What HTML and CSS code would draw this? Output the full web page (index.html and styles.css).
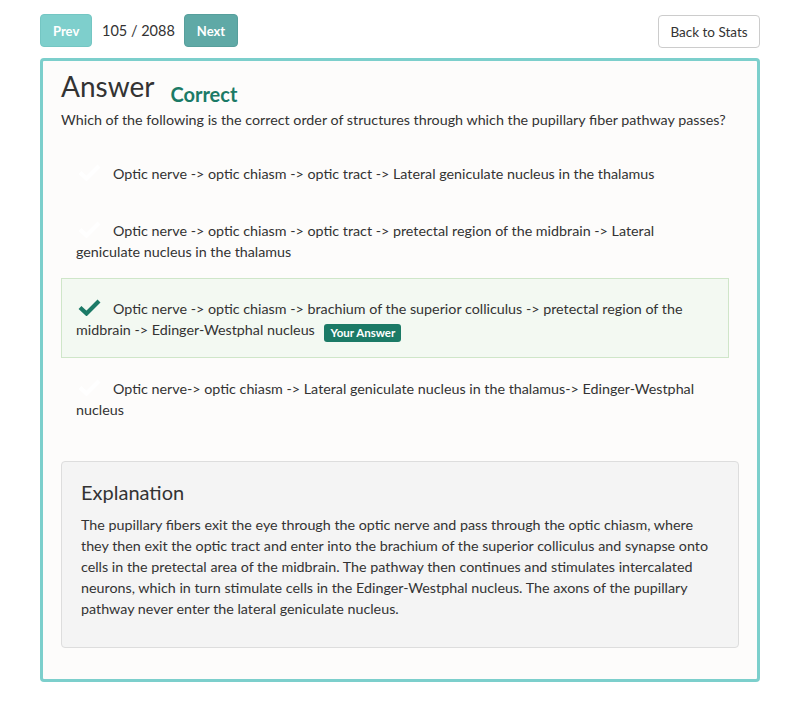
FILE: index.html
```html
<!DOCTYPE html>
<html>
<head>
<meta charset="utf-8">
<link rel="stylesheet" href="styles.css">
</head>
<body>
<div class="page">
  <div class="topbar">
    <div class="nav">
      <button class="btn btn-prev">Prev</button>
      <span class="counter">105 / 2088</span>
      <button class="btn btn-next">Next</button>
    </div>
    <button class="btn btn-back">Back to Stats</button>
  </div>
  <div class="card">
    <div class="head">
      <h1 class="title">Answer</h1>
      <span class="status">Correct</span>
    </div>
    <p class="question">Which of the following is the correct order of structures through which the pupillary fiber pathway passes?</p>
    <div class="options">
      <div class="option"><svg class="check check-hidden" width="23" height="17" viewBox="0 0 23 17"><path d="M2 8.5 L8.5 14.5 L21 2"/></svg>Optic nerve -&gt; optic chiasm -&gt; optic tract -&gt; Lateral geniculate nucleus in the thalamus</div>
      <div class="option"><svg class="check check-hidden" width="23" height="17" viewBox="0 0 23 17"><path d="M2 8.5 L8.5 14.5 L21 2"/></svg>Optic nerve -&gt; optic chiasm -&gt; optic tract -&gt; pretectal region of the midbrain -&gt; Lateral geniculate nucleus in the thalamus</div>
      <div class="option option-correct"><svg class="check" width="23" height="17" viewBox="0 0 23 17"><path d="M2 8.5 L8.5 14.5 L21 2"/></svg>Optic nerve -&gt; optic chiasm -&gt; brachium of the superior colliculus -&gt; pretectal region of the midbrain -&gt; Edinger-Westphal nucleus <span class="badge">Your Answer</span></div>
      <div class="option"><svg class="check check-hidden" width="23" height="17" viewBox="0 0 23 17"><path d="M2 8.5 L8.5 14.5 L21 2"/></svg>Optic nerve-&gt; optic chiasm -&gt; Lateral geniculate nucleus in the thalamus-&gt; Edinger-Westphal nucleus</div>
    </div>
    <div class="explanation">
      <h2 class="exp-title">Explanation</h2>
      <p class="exp-text">The pupillary fibers exit the eye through the optic nerve and pass through the optic chiasm, where they then exit the optic tract and enter into the brachium of the superior colliculus and synapse onto cells in the pretectal area of the midbrain. The pathway then continues and stimulates intercalated neurons, which in turn stimulate cells in the Edinger-Westphal nucleus. The axons of the pupillary pathway never enter the lateral geniculate nucleus.</p>
    </div>
  </div>
</div>
</body>
</html>
```
FILE: styles.css
```css
* { box-sizing: border-box; }
body {
  margin: 0;
  background: #ffffff;
  font-family: Lato, "Open Sans", sans-serif;
  color: #333333;
  font-size: 14.3px;
}
.page {
  width: 720px;
  margin: 0 auto;
  padding-top: 14px;
}
.topbar {
  display: flex;
  justify-content: space-between;
  align-items: flex-start;
  height: 44px;
}
.nav {
  display: flex;
  align-items: center;
  gap: 10px;
}
.btn {
  height: 33px;
  border-radius: 4px;
  font-family: Lato, sans-serif;
  font-size: 13px;
  padding: 0 12px;
  border: 1px solid transparent;
  cursor: pointer;
}
.btn-prev {
  width: 52px;
  background: #7ecfcc;
  border-color: #74c6c3;
  color: #fff;
  font-weight: 700;
}
.btn-next {
  width: 54px;
  margin-left: -1px;
  background: #5fa9a6;
  border-color: #579f9c;
  color: #fff;
  font-weight: 700;
}
.counter {
  font-size: 14.5px;
  color: #333;
}
.btn-back {
  margin-top: 1px;
  width: 102px;
  background: #fff;
  border-color: #cccccc;
  color: #333;
  font-size: 13.5px;
  padding: 0;
}
.card {
  border: 3px solid #7ccfcc;
  border-radius: 4px;
  background: #fdfcfb;
  padding: 7px 18px 31px 18px;
  height: 624px;
}
.head {
  display: flex;
  align-items: baseline;
  gap: 16px;
  height: 36px;
}
.title {
  margin: 0;
  font-size: 28px;
  font-weight: 400;
  line-height: 36px;
  color: #333;
}
.status {
  font-size: 20px;
  font-weight: 700;
  color: #1b7a66;
  position: relative;
  top: 5px;
}
.question {
  margin: 5px 0 0 0;
  line-height: 21px;
}
.options {
  margin-top: 13px;
  margin-right: 10px;
}
.option {
  padding: 19px 14px 15px 14px;
  line-height: 21px;
  border: 1px solid transparent;
}
.option-correct {
  background: #f3f9f2;
  border-color: #cfe6c9;
}
.check {
  display: inline-block;
  vertical-align: -2px;
  margin-left: 2px;
  margin-right: 12px;
  fill: none;
  stroke: #1b7a66;
  stroke-width: 4.2;
}
.check-hidden {
  stroke: #ffffff;
}
.badge {
  display: inline-block;
  background: #1b7a66;
  color: #fff;
  font-size: 11.5px;
  font-weight: 700;
  line-height: 17px;
  padding: 0 6px 1px 6px;
  border-radius: 3px;
  margin-left: 6px;
  vertical-align: -2px;
}
.explanation {
  margin-top: 25px;
  background: #f4f4f4;
  border: 1px solid #dddddd;
  border-radius: 4px;
  padding: 18px 20px 28px 19px;
}
.exp-title {
  margin: 0 0 10px 0;
  font-size: 20px;
  font-weight: 400;
  line-height: 24px;
  color: #333;
}
.exp-text {
  margin: 0;
  line-height: 21px;
}
```
